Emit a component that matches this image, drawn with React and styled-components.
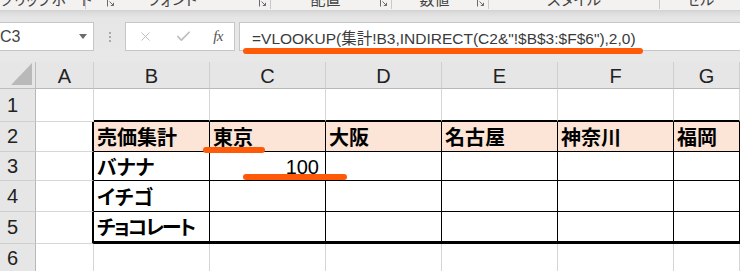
import React from "react";
import styled, { createGlobalStyle } from "styled-components";
import { X, Check } from "lucide-react";

const GlobalStyle = createGlobalStyle`
  html, body { margin: 0; padding: 0; background: #ffffff; overflow: hidden; }
  * { box-sizing: border-box; }
`;

const JP = `"Noto Sans CJK JP", "Noto Sans", sans-serif`;
const LAT = `"Liberation Sans", "Noto Sans CJK JP", Arial, sans-serif`;

const Root = styled.div`
  position: relative;
  width: 740px;
  height: 271px;
  overflow: hidden;
  display: flex;
  flex-direction: column;
  background: #e8e8e8;
`;

/* ---------- ribbon ---------- */
const Ribbon = styled.div`
  height: 11px;
  flex: none;
  display: flex;
  background: #f3f2f1;
  border-bottom: 1px solid #d2d2d2;
  overflow: hidden;
`;

const Group = styled.div`
  flex: none;
  width: ${(p) => p.$w}px;
  display: flex;
  align-items: flex-start;
  border-right: ${(p) => (p.$sep ? "1px solid #c9c9c9" : "none")};
  height: 9px;
`;

const GroupLabel = styled.div`
  flex: 1;
  display: flex;
  justify-content: ${(p) => (p.$end ? "flex-end" : "center")};
  padding-right: ${(p) => p.$pr || 0}px;
  margin-top: -10px;
  font-family: ${JP};
  font-feature-settings: "palt";
  font-size: 15px;
  line-height: 17px;
  color: #444;
  white-space: nowrap;
`;

const Launcher = styled.svg`
  flex: none;
  width: 8px;
  height: 8px;
  margin: -1px 3px 0 0;
`;

/* ---------- formula bar ---------- */
const FormulaBar = styled.div`
  flex: none;
  height: 51px;
  display: flex;
  align-items: flex-start;
  padding-top: 11px;
  background: linear-gradient(to bottom, #d8d8d8 0px, #e6e6e6 7px, #e8e8e8 100%);
`;

const Box = styled.div`
  height: 29px;
  background: #ffffff;
  border: 1px solid #c6c6c6;
  display: flex;
  align-items: center;
`;

const NameBox = styled(Box)`
  width: 96px;
  margin-left: -2px;
  padding-left: 1px;
  justify-content: space-between;
  font-family: ${LAT};
  font-size: 16px;
  color: #444;
`;

const Caret = styled.svg`
  width: 8px;
  height: 5px;
  margin-right: 6px;
`;

const Grip = styled.div`
  width: 31px;
  height: 29px;
  display: flex;
  flex-direction: column;
  align-items: center;
  justify-content: center;
  gap: 2px;
`;

const Dot = styled.span`
  width: 2px;
  height: 2px;
  background: #a9a9a9;
`;

const ButtonBox = styled(Box)`
  width: 110px;
  justify-content: space-between;
  padding: 0 11px 0 12px;
`;

const Fx = styled.span`
  font-family: "Liberation Serif", "DejaVu Serif", serif;
  font-style: italic;
  font-size: 15px;
  color: #555;
  letter-spacing: -0.5px;
`;

const FormulaBox = styled(Box)`
  position: relative;
  flex: 1;
  margin-left: 4px;
  margin-right: -2px;
  padding-left: 12px;
  font-family: ${LAT};
  font-size: 15.5px;
  color: #3a3a3a;
  white-space: nowrap;
`;

const Mark = styled.div`
  position: absolute;
  z-index: 3;
  left: ${(p) => p.$x}px;
  top: ${(p) => p.$y}px;
  width: ${(p) => p.$w}px;
  height: 6px;
  border-radius: 3px;
  background: #ff5a08;
`;

/* ---------- sheet ---------- */
const Sheet = styled.div`
  flex: 1;
  display: grid;
  grid-template-columns: 36px 58px repeat(5, 116px) 1fr;
  grid-template-rows: 27px 33px 30px 29px 31px 32px 30px;
  background: #ffffff;
`;

const Corner = styled.div`
  background: #e6e6e6;
  border-right: 1px solid #bdbdbd;
  border-bottom: 1px solid #bdbdbd;
  display: flex;
  align-items: flex-end;
  justify-content: flex-end;
`;

const CornerTriangle = styled.svg`
  width: 22px;
  height: 23px;
  margin: 0 2px 2px 0;
`;

const ColHead = styled.div`
  background: #e6e6e6;
  border-right: 1px solid #cfcfcf;
  border-bottom: 1px solid #b8b8b8;
  display: flex;
  align-items: center;
  justify-content: center;
  padding-top: 2px;
  font-family: ${LAT};
  font-size: 20px;
  color: #222;
`;

const RowHead = styled.div`
  background: #e6e6e6;
  border-right: 1px solid #b8b8b8;
  border-bottom: 1px solid #cfcfcf;
  display: flex;
  align-items: center;
  padding-left: 7px;
  font-family: ${LAT};
  font-size: 20px;
  color: #222;
`;

const Cell = styled.div`
  position: relative;
  background: ${(p) => p.$bg || "#ffffff"};
  border-right: ${(p) => p.$right};
  border-bottom: ${(p) => p.$bottom};
  display: flex;
  align-items: center;
  justify-content: ${(p) => (p.$num ? "flex-end" : "flex-start")};
  padding: ${(p) => (p.$num ? "2px 6px 0 0" : "0 0 0 3px")};
  font-family: ${(p) => (p.$num ? LAT : JP)};
  font-feature-settings: "palt";
  font-weight: ${(p) => (p.$num ? 400 : 700)};
  font-size: 20px;
  letter-spacing: ${(p) => p.$ls || 0}px;
  color: #000;
  white-space: nowrap;
`;

const GRID = "1px solid #d6d6d6";
const INK = "1px solid #000";

const COLS = ["A", "B", "C", "D", "E", "F", "G"];
const DATA = {
  2: ["", "売価集計", "東京", "大阪", "名古屋", "神奈川", "福岡"],
  3: ["", "バナナ", "100", "", "", "", ""],
  4: ["", "イチゴ", "", "", "", "", ""],
  5: ["", "チョコレート", "", "", "", "", ""],
};

function borders(r, c) {
  const inTable = r >= 2 && r <= 5 && c >= 1;
  let right = GRID;
  let bottom = GRID;
  if (inTable) {
    right = INK;
    bottom = r === 5 ? "3px solid #000" : INK;
  }
  if (c === 0 && r >= 2 && r <= 5) right = "2px solid #000";
  if (r === 1 && c >= 1) bottom = "2px solid #000";
  return { right, bottom };
}

const RIBBON = [
  { w: 86, label: "クリップボード", end: true, pr: 14, launcher: true },
  { w: 185, label: "フォント", launcher: true },
  { w: 121, label: "配置", launcher: true },
  { w: 97, label: "数値", launcher: true },
  { w: 171, label: "スタイル" },
  { w: 80, label: "セル", nosep: true },
];

function LauncherIcon() {
  return (
    <Launcher viewBox="0 0 8 8">
      <path d="M0.5 7.5V0.5H7.5" fill="none" stroke="#6a6a6a" strokeWidth="1" />
      <path d="M2.5 2.5L6.5 6.5M3.8 6.5H6.5V3.8" fill="none" stroke="#6a6a6a" strokeWidth="1" />
    </Launcher>
  );
}

export default function App() {
  const cells = [];
  cells.push(
    <Corner key="corner">
      <CornerTriangle viewBox="0 0 22 23">
        <polygon points="21,0 21,22 0,22" fill="#b9b9b9" />
      </CornerTriangle>
    </Corner>
  );
  COLS.forEach((l) => cells.push(<ColHead key={"h" + l}>{l}</ColHead>));
  for (let r = 1; r <= 6; r++) {
    cells.push(<RowHead key={"r" + r}>{r}</RowHead>);
    COLS.forEach((l, c) => {
      const { right, bottom } = borders(r, c);
      const text = (DATA[r] && DATA[r][c]) || "";
      const num = /^\d+$/.test(text);
      cells.push(
        <Cell
          key={l + r}
          $right={right}
          $bottom={bottom}
          $bg={r === 2 && c >= 1 ? "#fce4d6" : undefined}
          $num={num}
          $ls={text.length > 4 ? -2 : 0}
        >
          {text}
          {r === 2 && c === 2 && <Mark $x={-7} $y={25} $w={62} />}
          {r === 3 && c === 2 && <Mark $x={33} $y={22} $w={104} />}
        </Cell>
      );
    });
  }

  return (
    <Root>
      <GlobalStyle />
      <Ribbon>
        {RIBBON.map((g) => (
          <Group key={g.label} $w={g.w} $sep={!g.nosep}>
            <GroupLabel $end={g.end} $pr={g.pr}>{g.label}</GroupLabel>
            {g.launcher && <LauncherIcon />}
          </Group>
        ))}
      </Ribbon>
      <FormulaBar>
        <NameBox>
          <span>C3</span>
          <Caret viewBox="0 0 8 5">
            <polygon points="0,0 8,0 4,5" fill="#6b6b6b" />
          </Caret>
        </NameBox>
        <Grip>
          <Dot />
          <Dot />
          <Dot />
        </Grip>
        <ButtonBox>
          <X size={15} color="#bdbdbd" strokeWidth={1.6} />
          <Check size={17} color="#bdbdbd" strokeWidth={2.4} />
          <Fx>fx</Fx>
        </ButtonBox>
        <FormulaBox>
          =VLOOKUP(集計!B3,INDIRECT(C2&amp;"!$B$3:$F$6"),2,0)
          <Mark $x={3} $y={25} $w={400} />
        </FormulaBox>
      </FormulaBar>
      <Sheet>{cells}</Sheet>
    </Root>
  );
}
